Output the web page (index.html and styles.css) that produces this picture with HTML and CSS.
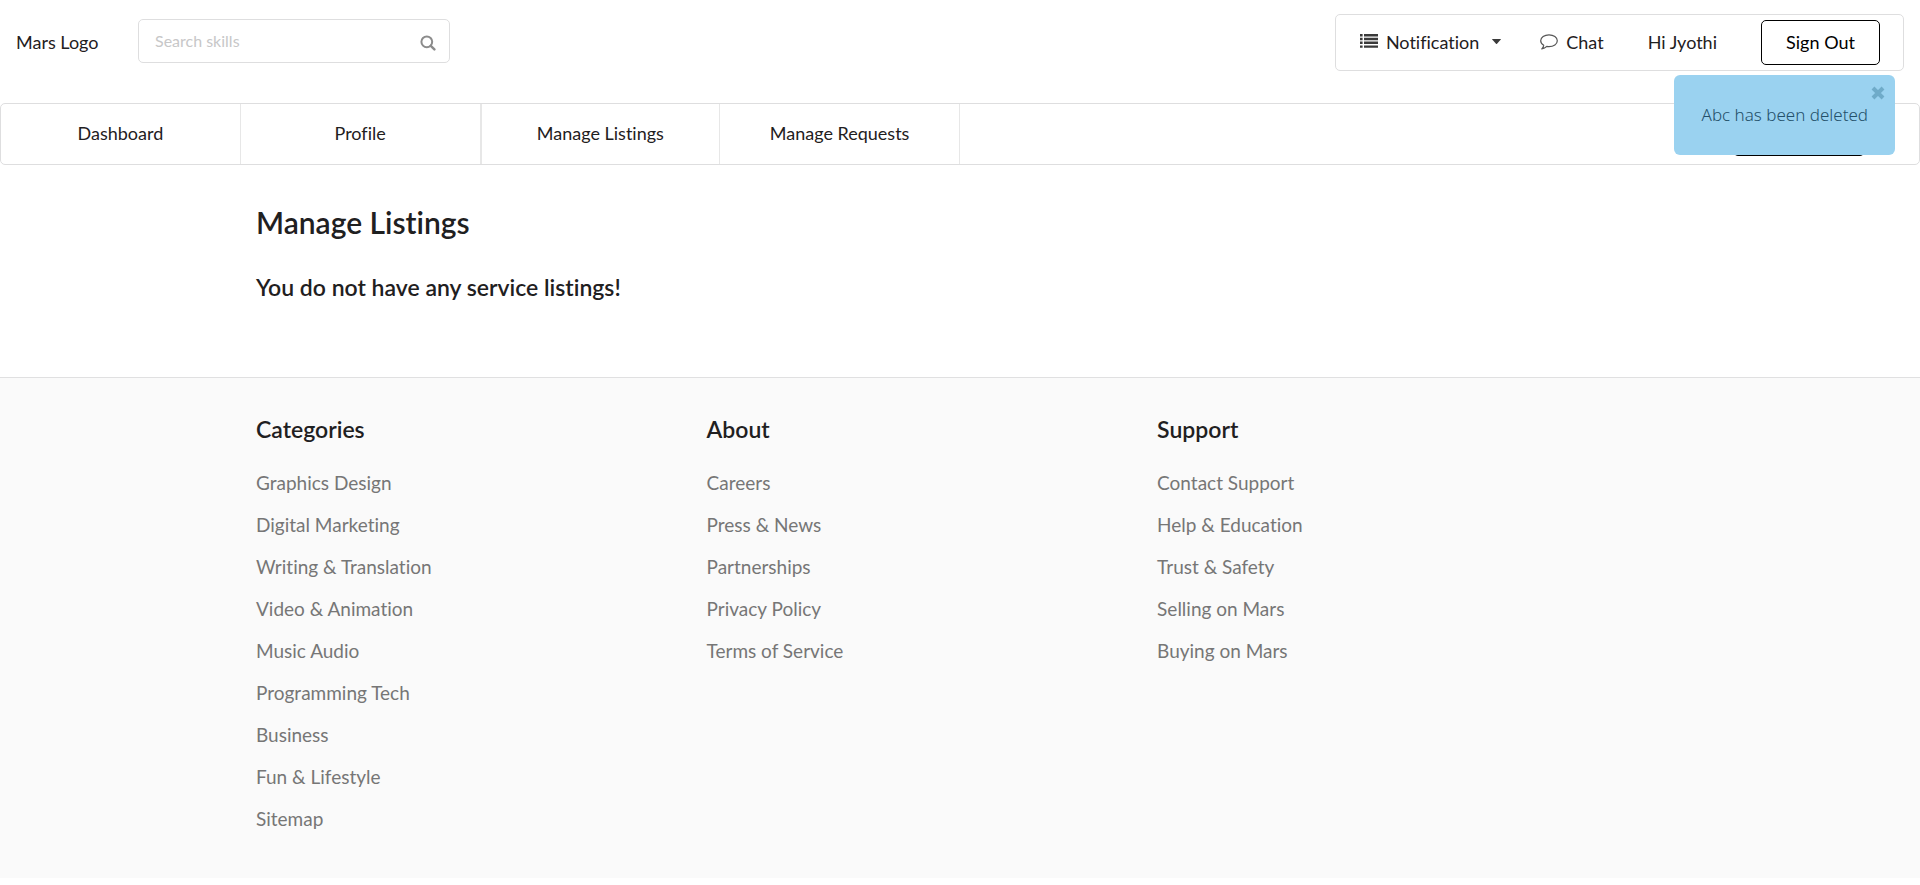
FILE: index.html
```html
<!DOCTYPE html>
<html lang="en">
<head>
<meta charset="utf-8">
<title>Manage Listings</title>
<meta name="viewport" content="width=device-width, initial-scale=1">
<link rel="stylesheet" href="styles.css">
</head>
<body>
<header class="topbar">
  <a class="logo" href="#">Mars Logo</a>
  <form class="search" role="search">
    <input class="search-input" type="text" placeholder="Search skills" aria-label="Search skills">
    <button class="search-button" type="button" aria-label="Search">
      <svg class="icon-search" viewBox="0 0 16 16" aria-hidden="true"><circle cx="6.8" cy="6.8" r="5.4" fill="none" stroke="currentColor" stroke-width="2"/><path d="M10.800 10.800 14.400 14.400" stroke="currentColor" stroke-width="2.400" stroke-linecap="round"/></svg>
    </button>
  </form>
  <div class="account">
    <button class="account-item notification" type="button">
      <svg class="icon-list" viewBox="0 0 18 14" aria-hidden="true"><path fill="currentColor" d="M0 0h2.6v2.4H0zM0 3.8h2.6v2.4H0zM0 7.6h2.6V10H0zM0 11.4h2.6v2.4H0zM4 0h14v2.4H4zM4 3.8h14v2.4H4zM4 7.6h14V10H4zM4 11.4h14v2.4H4z"/></svg>
      <span>Notification</span>
      <svg class="icon-caret" viewBox="0 0 9 5" aria-hidden="true"><path fill="currentColor" d="M.5 0h8q.7.1.3.6L5 4.7q-.5.5-1 0L.2.6Q-.2.1.5 0z"/></svg>
    </button>
    <a class="account-item chat" href="#">
      <svg class="icon-chat" viewBox="0 0 18 16" aria-hidden="true"><path fill="none" stroke="currentColor" stroke-width="1.2" stroke-linejoin="round" d="M9 .8c4.600 0 8.300 2.600 8.300 5.900S13.600 12.600 9 12.600c-.8 0-1.500-.1-2.200-.2-1.300 1.300-2.900 2.200-5 2.500 1-1 1.700-2.100 1.900-3.600C1.900 10.200.7 8.600.7 6.700.7 3.400 4.400.8 9 .8z"/></svg>
      <span>Chat</span>
    </a>
    <span class="account-item greeting">Hi Jyothi</span>
    <button class="outline-button" type="button">Sign Out</button>
  </div>
</header>

<nav class="tabs">
  <a class="tab" href="#">Dashboard</a>
  <a class="tab" href="#">Profile</a>
  <a class="tab active" href="#">Manage Listings</a>
  <a class="tab" href="#">Manage Requests</a>
  <button class="share-button" type="button" aria-label="Share skill"></button>
</nav>

<main class="content">
  <h2 class="page-title">Manage Listings</h2>
  <h3 class="empty-message">You do not have any service listings!</h3>
</main>

<footer class="footer">
  <div class="footer-grid">
    <section>
      <h3 class="footer-title">Categories</h3>
      <ul class="links">
        <li><a href="#">Graphics Design</a></li>
        <li><a href="#">Digital Marketing</a></li>
        <li><a href="#">Writing &amp; Translation</a></li>
        <li><a href="#">Video &amp; Animation</a></li>
        <li><a href="#">Music Audio</a></li>
        <li><a href="#">Programming Tech</a></li>
        <li><a href="#">Business</a></li>
        <li><a href="#">Fun &amp; Lifestyle</a></li>
        <li><a href="#">Sitemap</a></li>
      </ul>
    </section>
    <section>
      <h3 class="footer-title">About</h3>
      <ul class="links">
        <li><a href="#">Careers</a></li>
        <li><a href="#">Press &amp; News</a></li>
        <li><a href="#">Partnerships</a></li>
        <li><a href="#">Privacy Policy</a></li>
        <li><a href="#">Terms of Service</a></li>
      </ul>
    </section>
    <section>
      <h3 class="footer-title">Support</h3>
      <ul class="links">
        <li><a href="#">Contact Support</a></li>
        <li><a href="#">Help &amp; Education</a></li>
        <li><a href="#">Trust &amp; Safety</a></li>
        <li><a href="#">Selling on Mars</a></li>
        <li><a href="#">Buying on Mars</a></li>
      </ul>
    </section>
  </div>
</footer>

<div class="toast" role="status">
  <span>Abc has been deleted</span>
  <button class="toast-close" type="button" aria-label="Close">
    <svg class="icon-close" viewBox="0 0 14 14" aria-hidden="true"><path d="M2 2 12 12M12 2 2 12" stroke="currentColor" stroke-width="4"/></svg>
  </button>
</div>
</body>
</html>
```

FILE: styles.css
```css
* {
  box-sizing: border-box;
}

body {
  margin: 0;
  background: #fff;
  color: #1f2021;
  font: 18px/24px Lato, "Liberation Sans", sans-serif;
  font-variant-ligatures: no-common-ligatures;
}

a {
  color: inherit;
  text-decoration: none;
}

button {
  padding: 0;
  border: 0;
  background: none;
  color: inherit;
  font: inherit;
  font-variant-ligatures: inherit;
  cursor: pointer;
}

h2,
h3,
ul {
  margin: 0;
}

h2,
h3 {
  font-weight: 600;
}

svg {
  display: block;
}

.topbar {
  display: flex;
  align-items: flex-start;
  padding: 14px 16px 0;
}

.logo {
  width: 122px;
  padding-top: 16px;
}

.search {
  display: flex;
  align-items: center;
  width: 312px;
  height: 44px;
  margin-top: 5px;
  padding: 0 13px 0 16px;
  border: 1px solid #dededf;
  border-radius: 5px;
}

.search-input {
  flex: 1;
  min-width: 0;
  padding: 0;
  border: 0;
  outline: 0;
  background: none;
  color: inherit;
  font: 16px/20px Lato, "Liberation Sans", sans-serif;
}

.search-input::placeholder {
  color: #c7c7c8;
  opacity: 1;
}

.search-button {
  color: #8c8c8c;
}

.icon-search {
  width: 16px;
  height: 16px;
  margin-top: 4px;
}

.account {
  display: flex;
  align-items: center;
  height: 57px;
  margin-left: auto;
  padding: 0 23px 0 24px;
  border: 1px solid #dededf;
  border-radius: 5px;
}

.account-item {
  display: flex;
  align-items: center;
  padding-bottom: 2px;
}

.notification {
  margin-right: 39px;
}

.icon-list {
  width: 18px;
  height: 14px;
  margin: 0 8px 2px 0;
  color: #3a3a3a;
}

.icon-caret {
  width: 9px;
  height: 5px;
  margin-left: 13px;
  color: #3a3a3a;
}

.chat {
  margin-right: 44px;
}

.icon-chat {
  width: 18px;
  height: 16px;
  margin-right: 8px;
  color: #555;
}

.greeting {
  margin-right: 44px;
}

.outline-button {
  width: 119px;
  height: 45px;
  padding-bottom: 2px;
  border: 1px solid #000;
  border-radius: 5px;
  color: #000;
}

.tabs {
  display: flex;
  height: 62px;
  margin-top: 32px;
  border: 1px solid #dededf;
  border-radius: 5px;
}

.tab {
  display: flex;
  align-items: center;
  justify-content: center;
  width: 12.5%;
  padding-bottom: 2px;
  border-right: 1px solid #e7e7e7;
}

.tab.active {
  border-left: 1px solid #e7e7e7;
}

.share-button {
  align-self: flex-end;
  width: 132px;
  height: 45px;
  margin: 0 54px 8px auto;
  border: 1px solid #000;
  border-radius: 5px;
}

.content,
.footer-grid {
  margin: 0 256px;
}

.page-title {
  padding-top: 37px;
  font-size: 30px;
  line-height: 40px;
}

.empty-message {
  padding: 30px 0 74px;
  font-size: 23px;
  line-height: 31px;
}

.footer {
  padding: 36px 0 38px;
  border-top: 1px solid #e0e0e1;
  background: #fafafa;
}

.footer-grid {
  display: grid;
  grid-template-columns: repeat(3, 32%);
}

.footer-title {
  font-size: 23px;
  line-height: 30px;
}

.links {
  padding: 18px 0 0;
  color: #767676;
  font-size: 19px;
  list-style: none;
}

.links li {
  line-height: 42px;
}

.toast {
  position: absolute;
  top: 75px;
  right: 25px;
  display: flex;
  align-items: center;
  height: 80px;
  padding: 0 27px 0 28px;
  border-radius: 6px;
  background: #9ad2f0;
  color: #24506a;
  font: 17px/24px "Noto Sans", "Open Sans", sans-serif;
  font-weight: 300;
}

.toast-close {
  position: absolute;
  top: 11px;
  right: 10px;
  color: #6fabc9;
}

.icon-close {
  width: 14px;
  height: 14px;
}
```
